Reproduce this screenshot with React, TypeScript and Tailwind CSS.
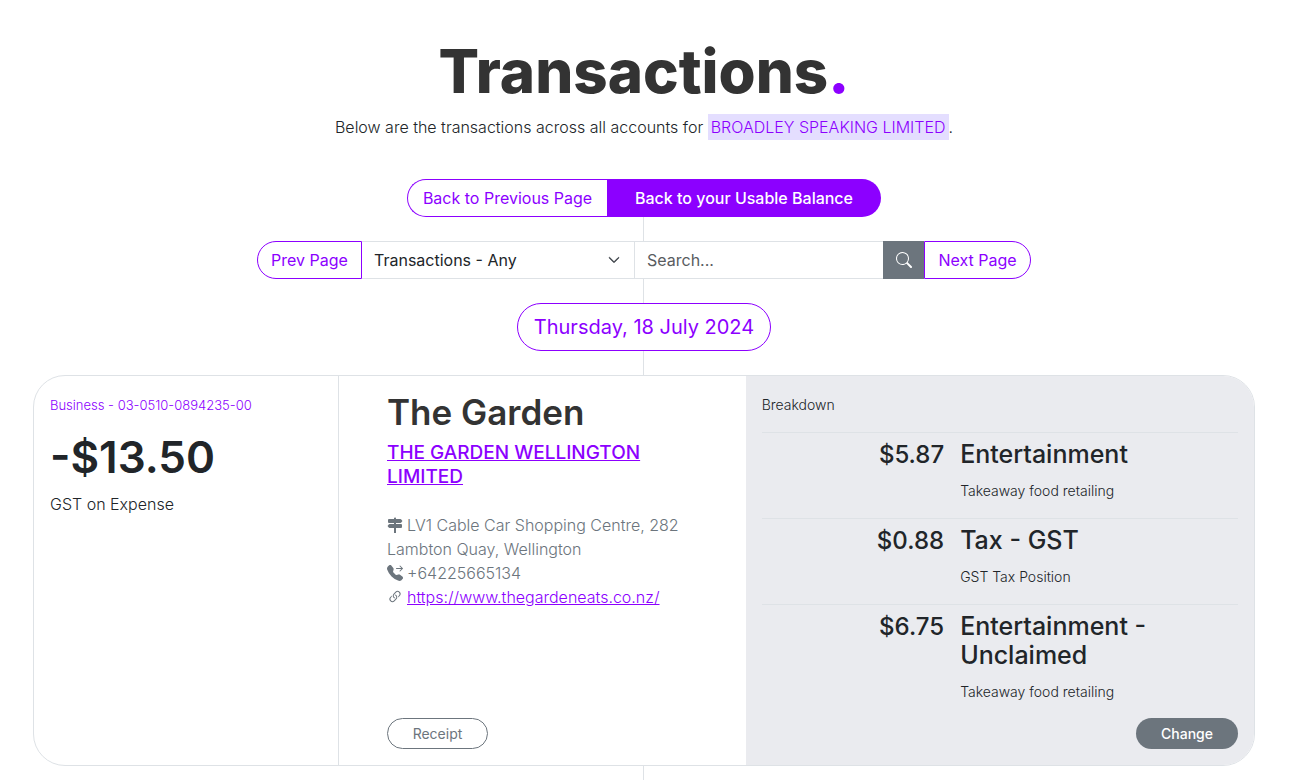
import React from "react";
import {
  BsChevronDown,
  BsLink45Deg,
  BsSearch,
  BsSignpost2Fill,
  BsTelephoneForwardFill,
} from "react-icons/bs";

type BreakdownItem = { amount: string; name: string; detail: string };

const breakdown: BreakdownItem[] = [
  { amount: "$5.87", name: "Entertainment", detail: "Takeaway food retailing" },
  { amount: "$0.88", name: "Tax - GST", detail: "GST Tax Position" },
  { amount: "$6.75", name: "Entertainment - Unclaimed", detail: "Takeaway food retailing" },
];

function Connector() {
  return <div aria-hidden="true" className="h-6 w-0.5 border-l border-[#dee2e6]" />;
}

function PageHeader() {
  return (
    <header className="text-center">
      <h1 className="text-[60px] leading-[72px] font-extrabold text-[#333333]">
        Transactions<span className="text-[#8c00ff]">.</span>
      </h1>
      <p className="mt-2 text-[16px] leading-6 font-light">
        Below are the transactions across all accounts for{" "}
        <a href="#company" className="bg-[#e4deff] px-[3px] py-[3px] text-[#8c00ff]">
          BROADLEY SPEAKING LIMITED
        </a>
        .
      </p>
    </header>
  );
}

function BackLinks() {
  return (
    <nav className="mt-10 flex h-[38px] w-full max-w-[474px] text-[16px]">
      <a
        href="#previous"
        className="flex w-[200px] items-center justify-center rounded-l-full border border-r-0 border-[#8c00ff] bg-white text-[#8c00ff]"
      >
        Back to Previous Page
      </a>
      <a
        href="#balance"
        className="flex flex-1 items-center justify-center rounded-r-full bg-[#8c00ff] font-medium text-white"
      >
        Back to your Usable Balance
      </a>
    </nav>
  );
}

function FilterBar() {
  return (
    <form className="flex h-[38px] w-full max-w-[774px] bg-white text-[16px]">
      <button
        type="button"
        className="w-[105px] rounded-l-full border border-[#8c00ff] text-[#8c00ff]"
      >
        Prev Page
      </button>
      <div className="relative w-[273px]">
        <select
          aria-label="Transaction type"
          className="h-full w-full appearance-none border-y border-r border-[#dee2e6] bg-white pr-9 pl-3 text-[#212529]"
        >
          <option>Transactions - Any</option>
        </select>
        <BsChevronDown className="pointer-events-none absolute top-[13px] right-[15px] size-3 stroke-1 text-[#343a40]" />
      </div>
      <input
        type="text"
        aria-label="Search"
        placeholder="Search..."
        className="min-w-0 flex-1 border-y border-[#dee2e6] px-3 placeholder:text-[#595c5f]"
      />
      <button
        type="submit"
        aria-label="Search transactions"
        className="flex w-[41px] items-center justify-center bg-[#6c757d] text-white"
      >
        <BsSearch className="size-4" />
      </button>
      <button
        type="button"
        className="w-[107px] rounded-r-full border border-[#8c00ff] text-[#8c00ff]"
      >
        Next Page
      </button>
    </form>
  );
}

function AccountPanel() {
  return (
    <section className="col-span-3 border-r border-[#dee2e6] p-4">
      <p className="text-[13px] leading-[26px] font-light text-[#8c00ff]">
        Business - 03-0510-0894235-00
      </p>
      <p className="mt-3 text-[44px] leading-[54px] font-semibold">-$13.50</p>
      <p className="mt-2 text-[16px] leading-6 font-light">GST on Expense</p>
    </section>
  );
}

function MerchantPanel() {
  return (
    <section className="col-span-4 flex flex-col px-12 py-4">
      <h2 className="text-[35px] leading-10 font-semibold text-[#333333]">The Garden</h2>
      <h3 className="mt-[9px] text-[19px] leading-6 font-medium">
        <a href="#merchant" className="text-[#8c00ff] underline">
          THE GARDEN WELLINGTON LIMITED
        </a>
      </h3>
      <address className="mt-6 text-[16px] leading-6 font-light text-[#6c757d] not-italic">
        <p>
          <BsSignpost2Fill className="mr-1 inline size-4 align-[-2px]" />
          LV1 Cable Car Shopping Centre, 282 Lambton Quay, Wellington
        </p>
        <p>
          <BsTelephoneForwardFill className="mr-1 inline size-4 align-[-2px]" />
          +64225665134
        </p>
        <p>
          <BsLink45Deg className="mr-1 inline size-4 align-[-2px]" />
          <a href="https://www.thegardeneats.co.nz/" className="text-[#8c00ff] underline">
            https://www.thegardeneats.co.nz/
          </a>
        </p>
      </address>
      <button
        type="button"
        className="mt-auto h-[31px] w-[101px] rounded-full border border-[#6c757d] text-[14px] text-[#6c757d]"
      >
        Receipt
      </button>
    </section>
  );
}

function BreakdownPanel() {
  return (
    <section className="col-span-5 flex flex-col bg-[#eaebef] p-4">
      <h2 className="mb-[14px] text-[14px] leading-[26px] font-light">Breakdown</h2>
      <ul>
        {breakdown.map((item) => (
          <li
            key={item.name}
            className="grid grid-cols-12 border-t border-[#dee2e6] pt-[7px] pb-[15px] last:pb-2"
          >
            <p className="col-span-5 pr-4 text-right text-[24px] leading-[29px] font-medium">
              {item.amount}
            </p>
            <div className="col-span-7">
              <h3 className="text-[25px] leading-[29px] font-medium">{item.name}</h3>
              <p className="mt-[10px] text-[14px] leading-6 font-light">{item.detail}</p>
            </div>
          </li>
        ))}
      </ul>
      <button
        type="button"
        className="mt-auto h-[31px] w-[102px] self-end rounded-full bg-[#6c757d] text-[14px] font-medium text-white"
      >
        Change
      </button>
    </section>
  );
}

export default function App() {
  return (
    <main className="flex flex-col items-center bg-white pt-[35px] pr-[34px] pl-[33px] font-['Inter',sans-serif] text-[#212529]">
      <PageHeader />
      <BackLinks />
      <Connector />
      <FilterBar />
      <Connector />
      <h2 className="flex h-12 w-[254px] items-center justify-center rounded-full border border-[#8c00ff] text-[20px] text-[#8c00ff]">
        Thursday, 18 July 2024
      </h2>
      <Connector />
      <article className="grid min-h-[391px] w-full grid-cols-12 overflow-hidden rounded-[32px] border border-[#dee2e6]">
        <AccountPanel />
        <MerchantPanel />
        <BreakdownPanel />
      </article>
      <div aria-hidden="true" className="h-[14px] w-0.5 border-l border-[#dee2e6]" />
    </main>
  );
}
